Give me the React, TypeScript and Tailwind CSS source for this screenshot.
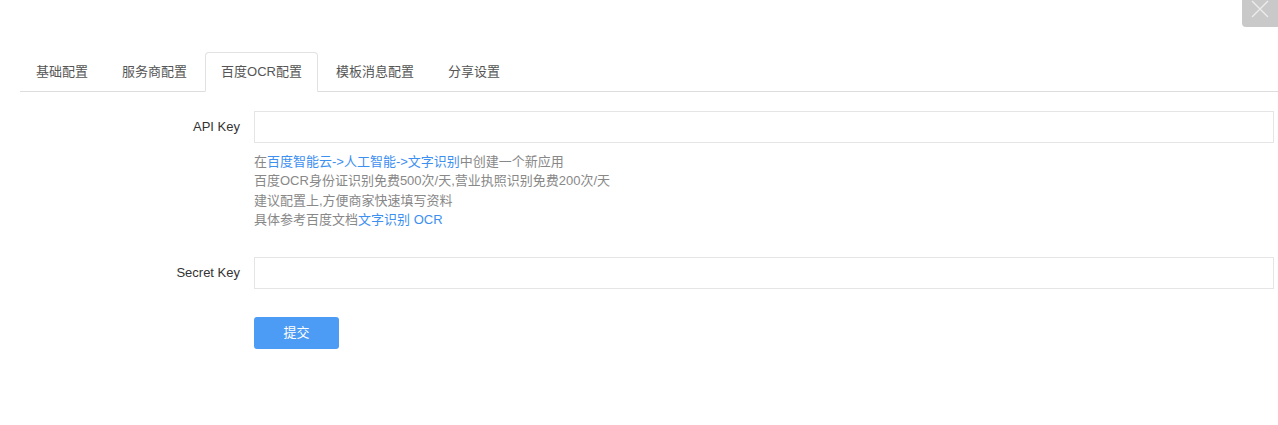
import React from "react";

const tabs = ["基础配置", "服务商配置", "百度OCR配置", "模板消息配置", "分享设置"];

export default function App() {
  return (
    <div
      className="relative w-[1278px] h-[425px] bg-white overflow-hidden"
      style={{ fontFamily: '"Liberation Sans", "Noto Sans CJK SC", sans-serif' }}
    >
      <div className="absolute top-0 right-0 w-[36px] h-[27px] bg-[#c9c9c9] rounded-bl-[4px] flex justify-center">
        <svg width="18" height="18" viewBox="0 0 18 18">
          <path d="M1 1 L17 17 M17 1 L1 17" stroke="#ececec" strokeWidth="1.3" fill="none" />
        </svg>
      </div>

      <div className="pt-[52px] pl-[20px]">
        <ul className="flex border-b border-[#dddddd] h-[40px]">
          {tabs.map((t, i) => (
            <li
              key={t}
              className={
                i === 2
                  ? "-mb-px mr-[2px] h-[40px] px-[15px] leading-[38px] text-[13px] text-[#555] border border-[#e2e2e2] border-b-white bg-white rounded-t-[4px]"
                  : "-mb-px mr-[2px] h-[40px] px-[15px] leading-[38px] text-[13px] text-[#555] border border-transparent"
              }
            >
              {t}
            </li>
          ))}
        </ul>

        <div className="mt-[19px] flex items-center">
          <label className="w-[220px] text-right text-[13px] text-[#333]">API Key</label>
          <input className="ml-[14px] mr-[4px] flex-1 h-[32px] border border-[#e5e5e5] outline-none" />
        </div>

        <div className="ml-[234px] mt-[9px] text-[13px] leading-[19.3px] text-[#888]">
          <div>
            在<span className="text-[#3d8ff0]">百度智能云-&gt;人工智能-&gt;文字识别</span>中创建一个新应用
          </div>
          <div>百度OCR身份证识别免费500次/天,营业执照识别免费200次/天</div>
          <div>建议配置上,方便商家快速填写资料</div>
          <div>
            具体参考百度文档<span className="text-[#3d8ff0]">文字识别 OCR</span>
          </div>
        </div>

        <div className="mt-[28px] flex items-center">
          <label className="w-[220px] text-right text-[13px] text-[#333]">Secret Key</label>
          <input className="ml-[14px] mr-[4px] flex-1 h-[32px] border border-[#e5e5e5] outline-none" />
        </div>

        <div className="ml-[234px] mt-[28px]">
          <button className="w-[85px] h-[32px] bg-[#4c9bf4] rounded-[3px] text-white text-[13px]">提交</button>
        </div>
      </div>
    </div>
  );
}
